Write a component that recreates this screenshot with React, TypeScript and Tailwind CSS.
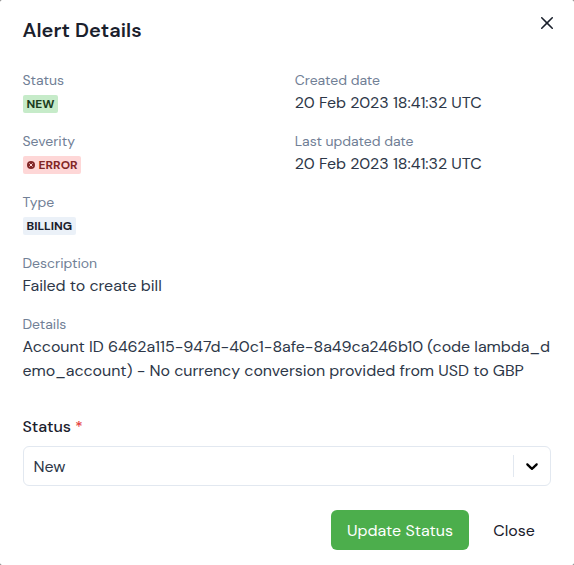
import React from 'react';

type FieldProps = { label: string; children: React.ReactNode };

function Field({ label, children }: FieldProps) {
  return (
    <div>
      <div className="h-[21px] text-sm leading-[21px] tracking-[-0.02px] whitespace-nowrap text-[#718096]">{label}</div>
      <div className="min-h-6 text-base leading-6 tracking-[-0.04px] text-[#2d3748]">{children}</div>
    </div>
  );
}

function Badge({ className, children }: { className: string; children: React.ReactNode }) {
  return (
    <div className="flex h-6 items-center pt-0.5 tracking-normal">
      <span className={`flex h-[18px] items-center rounded-[2px] px-1 text-xs leading-[18px] font-bold whitespace-nowrap ${className}`}>
        {children}
      </span>
    </div>
  );
}

export default function App() {
  return (
    <div className="h-[565px] w-[574px] bg-[#6b6b6b] font-['DM_Sans',Inter,sans-serif]">
      <section className="flex h-full flex-col rounded-[2px] bg-white pr-[23px] pl-[22.5px]">
        <header className="flex h-[70px] items-start justify-between">
          <h2 className="mt-[15px] text-xl leading-[30px] font-semibold tracking-[0.06px] text-[#1a202c]">Alert Details</h2>
          <button aria-label="Close" className="mt-[17px] -mr-[2px] text-[#1a202c]">
            <svg width="12" height="12" viewBox="0 0 24 24" fill="currentColor">
              <path d="M.439 21.44a1.5 1.5 0 0 0 2.122 2.121l9.262-9.261a.25.25 0 0 1 .354 0l9.262 9.263a1.5 1.5 0 1 0 2.122-2.121L14.3 12.177a.25.25 0 0 1 0-.354l9.263-9.262A1.5 1.5 0 0 0 21.439.44L12.177 9.7a.25.25 0 0 1-.354 0L2.561.44A1.5 1.5 0 0 0 .439 2.561L9.7 11.823a.25.25 0 0 1 0 .354z" />
            </svg>
          </button>
        </header>

        <div className="grid grid-cols-2 gap-4">
          <Field label="Status">
            <Badge className="bg-[#c6ebc9] text-[#1c3d1e]">NEW</Badge>
          </Field>
          <Field label="Created date">20 Feb 2023 18:41:32 UTC</Field>
          <Field label="Severity">
            <Badge className="w-[58px] bg-[#fed7d7] text-[#822727]">
              <svg className="mr-[3.5px] ml-[0.5px] shrink-0" width="8" height="8" viewBox="0 0 8 8">
                <circle cx="4" cy="4" r="4" fill="currentColor" />
                <path d="m2.7 2.7 2.6 2.6m0-2.6-2.6 2.6" stroke="#fed7d7" strokeWidth="1" strokeLinecap="round" />
              </svg>
              ERROR
            </Badge>
          </Field>
          <Field label="Last updated date">20 Feb 2023 18:41:32 UTC</Field>
          <div className="col-span-2">
            <Field label="Type">
              <Badge className="bg-[#ebf1f8] text-[#1a202c]">BILLING</Badge>
            </Field>
          </div>
          <div className="col-span-2">
            <Field label="Description">Failed to create bill</Field>
          </div>
          <div className="col-span-2">
            <Field label="Details">
              <p className="whitespace-nowrap">
                Account ID 6462a115-947d-40c1-8afe-8a49ca246b10 (code lambda_d
                <br />
                emo_account) - No currency conversion provided from USD to GBP
              </p>
            </Field>
          </div>
        </div>

        <label className="mt-8 mb-[7px] h-6 text-base leading-6 font-medium tracking-[-0.04px] text-[#1a202c]">
          Status<span className="ml-1 text-[#e53e3e]">*</span>
        </label>
        <div className="flex h-10 shrink-0 items-center rounded-md border border-[#e2e8f0] text-base text-[#2d3748]">
          <span className="flex-1 pt-[2px] pl-[10px]">New</span>
          <span className="h-[22px] w-px bg-[#e2e8f0]" />
          <svg className="mr-[8px] ml-[8px]" width="20" height="20" viewBox="0 0 20 20" fill="black">
            <path d="M4.516 7.548c0.436-0.446 1.043-0.481 1.576 0l3.908 3.747 3.908-3.747c0.533-0.481 1.141-0.446 1.574 0 0.436 0.445 0.408 1.197 0 1.615-0.406 0.418-4.695 4.502-4.695 4.502-0.217 0.223-0.502 0.335-0.787 0.335s-0.57-0.112-0.789-0.335c0 0-4.287-4.084-4.695-4.502s-0.436-1.17 0-1.615z" />
          </svg>
        </div>

        <footer className="mt-6 flex justify-end gap-2">
          <button className="h-10 w-[138px] rounded-md bg-[#4cae4c] pt-[2px] text-base whitespace-nowrap text-white">Update Status</button>
          <button className="h-10 w-[74px] pt-[2px] text-base text-[#1a202c]">Close</button>
        </footer>
      </section>
    </div>
  );
}
